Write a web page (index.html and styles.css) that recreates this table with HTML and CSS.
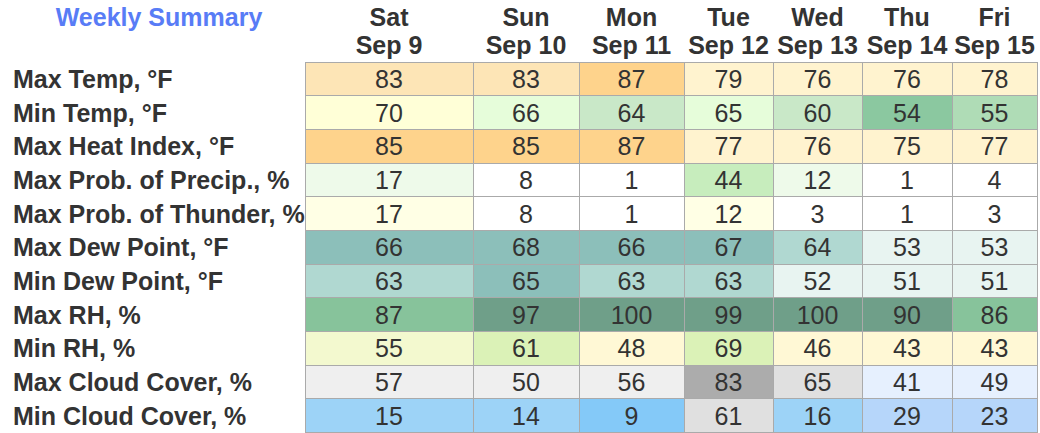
FILE: index.html
```html
<!DOCTYPE html>
<html>
<head>
<meta charset="utf-8">
<link rel="stylesheet" href="styles.css">
</head>
<body>
<table class="summary">
  <colgroup>
    <col class="c-label">
    <col class="c-sat">
    <col class="c-sun">
    <col class="c-mon">
    <col class="c-tue">
    <col class="c-wed">
    <col class="c-thu">
    <col class="c-fri">
  </colgroup>
  <thead>
    <tr class="head">
      <th class="title">Weekly Summary</th>
      <th>Sat<br>Sep 9</th>
      <th>Sun<br>Sep 10</th>
      <th>Mon<br>Sep 11</th>
      <th>Tue<br>Sep 12</th>
      <th>Wed<br>Sep 13</th>
      <th>Thu<br>Sep 14</th>
      <th>Fri<br>Sep 15</th>
    </tr>
  </thead>
  <tbody>
    <tr>
      <th class="label">Max Temp, °F</th>
      <td class="or1">83</td><td class="or1">83</td><td class="or2">87</td><td class="or0">79</td><td class="or0">76</td><td class="or0">76</td><td class="or0">78</td>
    </tr>
    <tr>
      <th class="label">Min Temp, °F</th>
      <td class="yl1">70</td><td class="gn1">66</td><td class="gn2">64</td><td class="gn1">65</td><td class="gn2">60</td><td class="gn4">54</td><td class="gn3">55</td>
    </tr>
    <tr>
      <th class="label">Max Heat Index, °F</th>
      <td class="or2">85</td><td class="or2">85</td><td class="or2">87</td><td class="or0">77</td><td class="or0">76</td><td class="or0">75</td><td class="or0">77</td>
    </tr>
    <tr>
      <th class="label">Max Prob. of Precip., %</th>
      <td class="pp1">17</td><td>8</td><td>1</td><td class="pp2">44</td><td class="pp1">12</td><td>1</td><td>4</td>
    </tr>
    <tr>
      <th class="label">Max Prob. of Thunder, %</th>
      <td class="th1">17</td><td>8</td><td>1</td><td class="th1">12</td><td>3</td><td>1</td><td>3</td>
    </tr>
    <tr>
      <th class="label">Max Dew Point, °F</th>
      <td class="dp3">66</td><td class="dp3">68</td><td class="dp3">66</td><td class="dp3">67</td><td class="dp2">64</td><td class="dp1">53</td><td class="dp1">53</td>
    </tr>
    <tr>
      <th class="label">Min Dew Point, °F</th>
      <td class="dp2">63</td><td class="dp3">65</td><td class="dp2">63</td><td class="dp2">63</td><td class="dp1">52</td><td class="dp1">51</td><td class="dp1">51</td>
    </tr>
    <tr>
      <th class="label">Max RH, %</th>
      <td class="rh3">87</td><td class="rh4">97</td><td class="rh4">100</td><td class="rh4">99</td><td class="rh4">100</td><td class="rh4">90</td><td class="rh3">86</td>
    </tr>
    <tr>
      <th class="label">Min RH, %</th>
      <td class="rh1">55</td><td class="rh2">61</td><td class="rh0">48</td><td class="rh2">69</td><td class="rh0">46</td><td class="rh0">43</td><td class="rh0">43</td>
    </tr>
    <tr>
      <th class="label">Max Cloud Cover, %</th>
      <td class="cc2">57</td><td class="cc2">50</td><td class="cc2">56</td><td class="cc4">83</td><td class="cc3">65</td><td class="cc1">41</td><td class="cc1">49</td>
    </tr>
    <tr>
      <th class="label">Min Cloud Cover, %</th>
      <td class="cl2">15</td><td class="cl2">14</td><td class="cl3">9</td><td class="cc3">61</td><td class="cl2">16</td><td class="cl1">29</td><td class="cl1">23</td>
    </tr>
  </tbody>
</table>
</body>
</html>
```

FILE: styles.css
```css
html, body {
  margin: 0;
  padding: 0;
  background: #ffffff;
}

body {
  font-family: "Liberation Sans", Arial, sans-serif;
  font-size: 25px;
  color: #333333;
}

.summary {
  border-collapse: collapse;
  table-layout: fixed;
  width: 1037px;
}

.c-label { width: 305px; }
.c-sat { width: 168px; }
.c-sun { width: 106px; }
.c-mon { width: 105px; }
.c-tue { width: 89px; }
.c-wed { width: 89px; }
.c-thu { width: 90px; }
.c-fri { width: 85px; }

.head {
  height: 62px;
}

.head th {
  padding: 3px 0 0 0;
  vertical-align: top;
  text-align: center;
  font-weight: bold;
  line-height: 28px;
  white-space: nowrap;
  color: #333333;
}

.head th.title {
  color: #587cf6;
  padding-left: 13px;
}

tbody tr {
  height: 33.7px;
}

.label {
  text-align: left;
  font-weight: bold;
  padding: 0 0 0 13px;
  white-space: nowrap;
  line-height: 28px;
  color: #333333;
}

tbody td {
  border: 1px solid #aaaaaa;
  padding: 0;
  text-align: center;
  line-height: 28px;
  background: #ffffff;
}

.or0 { background: #fff3cf; }
.or1 { background: #fde5b6; }
.or2 { background: #fed38c; }

.yl1 { background: #ffffd7; }
.gn1 { background: #e6fdda; }
.gn2 { background: #c9e8c8; }
.gn3 { background: #afdcb6; }
.gn4 { background: #8bc8a0; }

.pp1 { background: #eefaea; }
.pp2 { background: #c7edbd; }
.th1 { background: #ffffe5; }

.dp1 { background: #e8f4f1; }
.dp2 { background: #b0d8d1; }
.dp3 { background: #8cbfba; }

.rh0 { background: #fff8d5; }
.rh1 { background: #f3f9cf; }
.rh2 { background: #dbf2b7; }
.rh3 { background: #87c39b; }
.rh4 { background: #6f9f89; }

.cc1 { background: #e6f0fe; }
.cc2 { background: #efefef; }
.cc3 { background: #e0e0e0; }
.cc4 { background: #acacac; }

.cl1 { background: #b6d6fa; }
.cl2 { background: #9dd3f7; }
.cl3 { background: #84c9f8; }
```
